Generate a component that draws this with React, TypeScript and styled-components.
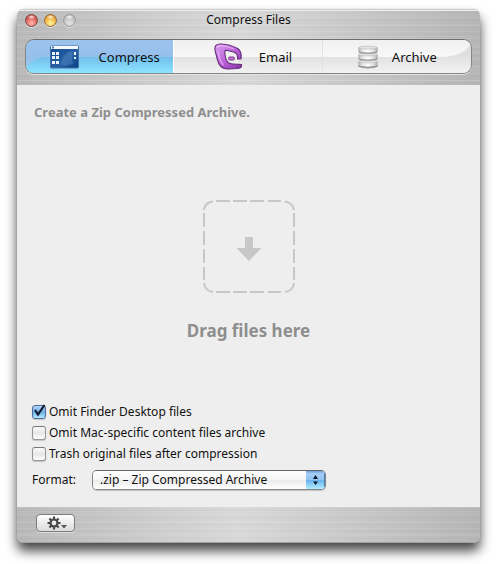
import React, { useState } from "react";
import styled, { createGlobalStyle, css } from "styled-components";

const GlobalStyle = createGlobalStyle`
  * { box-sizing: border-box; }
  body {
    margin: 0;
    background: #fff;
    color: #111;
    font-family: "Noto Sans", "Open Sans", sans-serif;
    font-size: 12px;
    line-height: 16px;
  }
  button, select, input { font: inherit; color: inherit; margin: 0; }
`;

const brushedMetal = css`
  background:
    repeating-linear-gradient(180deg, rgba(255,255,255,0.1) 0 1px, transparent 1px 3px, rgba(90,90,90,0.03) 3px 4px, transparent 4px 7px),
    repeating-linear-gradient(180deg, transparent 0 4px, rgba(255,255,255,0.08) 4px 5px, transparent 5px 11px),
    linear-gradient(90deg, #b8b8b8 0%, #c1c1c1 12%, #cccccc 28%, #d8d8d8 48%, #cfcfcf 62%, #c1c1c1 82%, #b5b5b5 100%);
`;

const Page = styled.div`
  display: flex;
  min-height: 100vh;
  padding: 9px 20px 21px 17px;
`;

const Window = styled.main`
  display: flex;
  flex: 1;
  flex-direction: column;
  overflow: hidden;
  border-radius: 7px;
  background: #eee;
  box-shadow: 0 0 1px rgba(0,0,0,0.3), 0 8px 12px rgba(0,0,0,0.72);
`;

const Header = styled.header`
  ${brushedMetal}
  padding: 0 8px 11px;
  border-top: 1px solid #ccc;
  box-shadow: inset 0 1px 0 #eee;
`;

const TitleBar = styled.div`
  display: grid;
  grid-template-columns: 1fr auto 1fr;
  align-items: center;
  height: 29px;
  padding-bottom: 9px;
`;

const Lights = styled.div`
  display: flex;
  gap: 6px;
`;

const Light = styled.button<{ $rim: string; $mid: string; $glow: string }>`
  width: 13px;
  height: 13px;
  padding: 0;
  border: 1px solid ${p => p.$rim};
  border-radius: 50%;
  background:
    radial-gradient(ellipse 4px 2px at 50% 18%, rgba(255,255,255,0.95), transparent),
    radial-gradient(circle at 50% 75%, ${p => p.$glow} 10%, ${p => p.$mid} 75%);
  box-shadow: 0 1px 0 rgba(255,255,255,0.6);
`;

const Title = styled.h1`
  margin: 0;
  font-size: 12px;
  font-weight: 400;
  line-height: 16px;
`;

const Tabs = styled.nav`
  display: grid;
  grid-template-columns: repeat(3, 1fr);
  height: 35px;
  overflow: hidden;
  border: 1px solid #858585;
  border-top-color: #6e6e6e;
  border-radius: 9px;
  box-shadow: 0 1px 0 #e4e4e4;
`;

const Tab = styled.button<{ $active: boolean; $gap: number }>`
  position: relative;
  display: flex;
  align-items: center;
  justify-content: center;
  gap: ${p => p.$gap}px;
  padding: 0 0 0 10px;
  border: 0;
  border-right: 1px solid ${p => (p.$active ? "#fff" : "#e2e2e2")};
  font-size: 13px;
  background: ${p => p.$active
    ? "linear-gradient(#9dc3ec, #94c0ec 50%, #9fccf0)"
    : "linear-gradient(#efefef, #f8f8f8 50%)"};

  &::before {
    content: "";
    position: absolute;
    inset: 50% 0 0;
    background: ${p => p.$active
      ? "linear-gradient(#73bdeb, #8ce5ff)"
      : "linear-gradient(#e1e1e1, #f2f2f2)"};
  }
  &:first-child::before { border-top-left-radius: 20px 15px; }
  &:last-child {
    padding-left: 0;
    border-right: 0;
    background: linear-gradient(#d9d9d9, #e1e1e1 50%, #f2f2f2);
  }
  &:last-child::before {
    inset: 0 0 50%;
    border-bottom-right-radius: 30px 16px;
    background: linear-gradient(#f0f0f0, #f9f9f9);
  }
  > * { position: relative; }
`;

const Content = styled.section`
  display: flex;
  flex: 1;
  flex-direction: column;
  padding: 18px 15px 17px;
`;

const Heading = styled.h2`
  margin: 0 2px;
  color: #8e8e8e;
  font-size: 13px;
  font-weight: 700;
  line-height: 18px;
`;

const DropZone = styled.div`
  display: flex;
  flex: 1;
  flex-direction: column;
  align-items: center;
  justify-content: center;
  gap: 26px;
  padding: 17px 0 0;
  color: #8e8e8e;
  font-size: 17px;
  font-weight: 700;
  line-height: 24px;
`;

const Options = styled.form`
  display: flex;
  flex-direction: column;
  gap: 5px;
`;

const CheckLabel = styled.label`
  display: flex;
  align-items: center;
  gap: 3px;
`;

const CheckWrap = styled.span`
  position: relative;
  display: flex;
  width: 14px;
  height: 14px;
`;

const CheckInput = styled.input`
  appearance: none;
  width: 14px;
  height: 14px;
  border: 1px solid #959595;
  border-top-color: #777;
  border-radius: 3px;
  background: linear-gradient(#fafafa, #e6e6e6 50%, #fff);
  box-shadow: 0 1px 1px rgba(0,0,0,0.18);
  &:checked {
    border-color: #4c6d9c;
    background: linear-gradient(#b5d5f5, #69aee9 50%, #b2eaff);
  }
`;

const CheckMark = styled.svg`
  position: absolute;
  left: 1px;
  bottom: 1px;
  pointer-events: none;
`;

const FormatRow = styled.div`
  display: flex;
  align-items: center;
  gap: 16px;
  margin-top: 3px;
`;

const SelectWrap = styled.div`
  position: relative;
  display: flex;
  flex: 0 1 234px;
  height: 20px;
  overflow: hidden;
  border: 1px solid #858585;
  border-top-color: #666;
  border-radius: 5px;
  box-shadow: 0 1px 1px rgba(0,0,0,0.2);
`;

const Select = styled.select`
  appearance: none;
  flex: 1;
  min-width: 0;
  padding: 0 22px 0 7px;
  border: 0;
  background: linear-gradient(#fff, #f5f5f5 49%, #eaeaea 50%, #fff);
`;

const Arrows = styled.span`
  position: absolute;
  inset: 0 0 0 auto;
  display: flex;
  align-items: center;
  justify-content: center;
  width: 19px;
  background: linear-gradient(#6c9fdd, #a5cef5 15%, #91c3f2 49%, #66b1ec 50%, #b0edff);
  box-shadow: inset -1px 0 0 #527fb5;
  pointer-events: none;
`;

const Footer = styled.footer`
  ${brushedMetal}
  height: 36px;
  padding: 7px 19px;
  border-bottom: 1px solid #a2a2a2;
`;

const GearButton = styled.button`
  display: flex;
  align-items: center;
  justify-content: center;
  width: 39px;
  height: 18px;
  padding: 0 0 0 2px;
  border: 1px solid #7d7d7d;
  border-radius: 4px;
  background: linear-gradient(#fff, #ececec 50%, #dcdcdc);
  box-shadow: 0 1px 0 #ddd;
`;

const WindowIcon = () => (
  <svg width="29" height="24" viewBox="0 0 29 24" aria-hidden="true">
    <defs>
      <linearGradient id="panel" x1="0" x2="1" y1="0" y2="1">
        <stop offset="0" stopColor="#154b92" />
        <stop offset=".6" stopColor="#255fa5" />
        <stop offset="1" stopColor="#083f85" />
      </linearGradient>
    </defs>
    <rect x=".5" y="1" width="28" height="22" rx="1" fill="url(#panel)" stroke="#47719f" />
    <path d="M11 20C12 11 17 6 23 6l-1 8 1 5-7 2z" fill="#5d91c4" opacity=".4" />
    <rect x="1" y="1" width="27" height="3" fill="#f5f8fc" />
    <rect x="2" y="1.5" width="2" height="2" fill="#4476aa" />
    <g fill="#edf3fa">
      <rect x="2" y="7" width="3" height="3" /><rect x="6" y="7" width="3" height="3" />
      <rect x="2" y="11" width="3" height="3" /><rect x="6" y="11" width="3" height="3" />
      <rect x="2" y="16" width="3" height="3" /><rect x="6" y="16" width="3" height="3" />
      <rect x="24" y="7" width="2" height="3" /><rect x="24" y="12" width="2" height="2" />
    </g>
  </svg>
);

const MailIcon = () => (
  <svg width="29" height="27" viewBox="0 0 29 27" aria-hidden="true">
    <defs>
      <linearGradient id="violet" x1="0" x2="1" y1="0" y2="1">
        <stop offset="0" stopColor="#dda5f2" />
        <stop offset=".5" stopColor="#bd62da" />
        <stop offset="1" stopColor="#8a32a8" />
      </linearGradient>
    </defs>
    <path d="M11 7.500L20 9.500C24 11 24 14 24 18V20H16C13 20 12 17 11.500 14Z" fill="#eee" />
    <path d="M27.500 21.500V23.500Q27 25 23 25.500L14 26C7 26 5 22 3.500 17L1.200 8C0 2.500 2.500 .8 7 1C13 1.200 19 3 23.500 5.500C27 7.500 27.500 12 27 16H23.500C24 12 23 10 19.500 9L13.500 7.500C10.500 7 10.500 8.500 11 11.500C11.500 16 12.500 19.500 16 20.500C19 21.500 24 21 27.500 21.500Z" fill="url(#violet)" stroke="#632e77" strokeWidth="1.100" strokeLinejoin="round" />
    <path d="M3 5C4 2.500 9 2.500 13 3.500L20 6M4 8C5 14 6.500 19 9.500 22" fill="none" stroke="#efbafa" strokeWidth="1.300" opacity=".7" />
    <rect x="14.500" y="14" width="6" height="3" rx="1.400" fill="#c574dc" stroke="#763688" />
  </svg>
);

const DiskIcon = () => (
  <svg width="22" height="24" viewBox="0 0 22 24" aria-hidden="true">
    <defs>
      <linearGradient id="steel">
        <stop offset="0" stopColor="#b3b3b3" />
        <stop offset=".2" stopColor="#e2e2e2" />
        <stop offset=".5" stopColor="#fff" />
        <stop offset=".8" stopColor="#dcdcdc" />
        <stop offset="1" stopColor="#aaa" />
      </linearGradient>
    </defs>
    <path d="M1 21Q11 25 21 21" fill="none" stroke="#888" />
    {[15, 8, 1].map(y => (
      <g key={y} transform={`translate(0 ${y})`}>
        <path d="M1.500 1.500v4.500C2 7.700 20 7.700 20.500 6V1.500Z" fill="url(#steel)" stroke="#b8b8b8" strokeWidth=".6" />
        <path d="M2 6C3 7.500 19 7.500 20 6" fill="none" stroke="#888" />
        <ellipse cx="11" cy="1.500" rx="9.500" ry="1.400" fill="#e2e2e2" stroke="#bbb" strokeWidth=".6" />
      </g>
    ))}
  </svg>
);

const DropIcon = () => (
  <svg width="92" height="94" viewBox="0 0 92 94" aria-hidden="true">
    <g fill="none" stroke="#c7c7c7" strokeWidth="2">
      <path d="M13 2H27M30 2H44M47 2H61M65 2H78M13 93H27M30 93H44M47 93H61M65 93H78M1 14V28M1 32V46M1 50V64M1 68V81M91 14V28M91 32V46M91 50V64M91 68V81" />
      <path d="M1 11Q2 3 10 2.500M82 2.500Q90 4 91 11M1 84Q2 92 10 93M82 93Q90 92 91 84" />
    </g>
    <path d="M42 38h8v11h8.500L46 62 33.500 49H42Z" fill="#c7c7c7" />
  </svg>
);

const GearIcon = () => (
  <svg width="24" height="16" viewBox="0 0 24 16" aria-hidden="true">
    <g stroke="#484848">
      <circle cx="9" cy="8" r="3.500" fill="none" strokeWidth="2.200" />
      {[0, 45, 90, 135, 180, 225, 270, 315].map(a => (
        <path key={a} d="M9 4V1.500" strokeWidth="2.200" transform={`rotate(${a} 9 8)`} />
      ))}
    </g>
    <path d="M16 10h6l-3 3.500z" fill="#555" />
  </svg>
);

const tabs = [
  { name: "Compress", icon: <WindowIcon />, gap: 20 },
  { name: "Email", icon: <MailIcon />, gap: 16 },
  { name: "Archive", icon: <DiskIcon />, gap: 13 },
];

const lights = [
  { name: "Close", rim: "#7c4544", mid: "#cd4a46", glow: "#ffaaa0" },
  { name: "Minimize", rim: "#94673a", mid: "#e59a2d", glow: "#ffed8b" },
  { name: "Zoom", rim: "#999", mid: "#b9b9b9", glow: "#dedede" },
];

const options = [
  "Omit Finder Desktop files",
  "Omit Mac-specific content files archive",
  "Trash original files after compression",
];

export default function App() {
  const [active, setActive] = useState("Compress");
  const [checked, setChecked] = useState([true, false, false]);

  return (
    <>
      <GlobalStyle />
      <Page>
        <Window>
          <Header>
            <TitleBar>
              <Lights>
                {lights.map(l => (
                  <Light key={l.name} type="button" aria-label={l.name} $rim={l.rim} $mid={l.mid} $glow={l.glow} />
                ))}
              </Lights>
              <Title>Compress Files</Title>
            </TitleBar>
            <Tabs>
              {tabs.map(t => (
                <Tab key={t.name} type="button" aria-pressed={active === t.name} $active={active === t.name} $gap={t.gap} onClick={() => setActive(t.name)}>
                  {t.icon}
                  <span>{t.name}</span>
                </Tab>
              ))}
            </Tabs>
          </Header>
          <Content>
            <Heading>Create a Zip Compressed Archive.</Heading>
            <DropZone>
              <DropIcon />
              <span>Drag files here</span>
            </DropZone>
            <Options>
              {options.map((text, i) => (
                <CheckLabel key={text}>
                  <CheckWrap>
                    <CheckInput type="checkbox" checked={checked[i]} onChange={() => setChecked(checked.map((c, n) => (n === i ? !c : c)))} />
                    {checked[i] && (
                      <CheckMark width="14" height="14" viewBox="0 0 14 14" aria-hidden="true">
                        <path d="M2 6L5 10.500L11.500 1" fill="none" stroke="#111a2c" strokeWidth="2.200" />
                      </CheckMark>
                    )}
                  </CheckWrap>
                  {text}
                </CheckLabel>
              ))}
              <FormatRow>
                <label htmlFor="format">Format:</label>
                <SelectWrap>
                  <Select id="format" defaultValue="zip">
                    <option value="zip">.zip – Zip Compressed Archive</option>
                  </Select>
                  <Arrows>
                    <svg width="7" height="12" viewBox="0 0 7 12" aria-hidden="true">
                      <path d="M3.500 1L6 5H1ZM3.500 11L1 7.500H6Z" fill="#101828" />
                    </svg>
                  </Arrows>
                </SelectWrap>
              </FormatRow>
            </Options>
          </Content>
          <Footer>
            <GearButton type="button" aria-label="Actions">
              <GearIcon />
            </GearButton>
          </Footer>
        </Window>
      </Page>
    </>
  );
}
